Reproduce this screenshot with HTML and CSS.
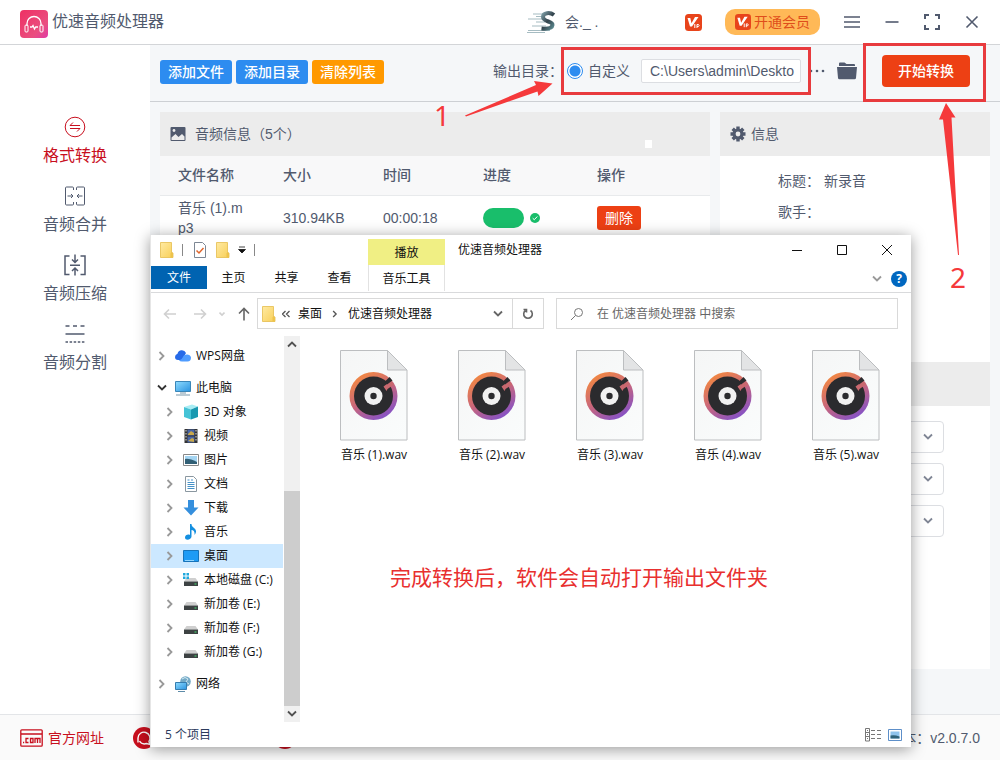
FILE: index.html
```html
<!DOCTYPE html>
<html lang="zh-CN">
<head>
<meta charset="utf-8">
<title>优速音频处理器</title>
<link rel="stylesheet" href="styles.css">
</head>
<body>
<svg class="defs" width="0" height="0" aria-hidden="true">
  <defs>
    <linearGradient id="g-logo" x1="0" y1="0" x2="1" y2="1"><stop offset="0" stop-color="#ee2f63"/><stop offset=".7" stop-color="#ea4f80"/><stop offset="1" stop-color="#e03aa8"/></linearGradient>
    <linearGradient id="g-ring" x1=".2" y1="0" x2=".8" y2="1"><stop offset="0" stop-color="#f68b3c"/><stop offset=".5" stop-color="#c8667c"/><stop offset="1" stop-color="#7c4fd0"/></linearGradient>
    <linearGradient id="g-folder" x1="0" y1="0" x2="1" y2="1"><stop offset="0" stop-color="#ffeaa2"/><stop offset="1" stop-color="#f8cf58"/></linearGradient>
    <linearGradient id="g-paper" x1="0" y1="0" x2="1" y2="1"><stop offset="0" stop-color="#f5f6f6"/><stop offset="1" stop-color="#fafcfc"/></linearGradient>
    <linearGradient id="g-screen" x1="0" y1="0" x2="1" y2="1"><stop offset="0" stop-color="#8fdcff"/><stop offset="1" stop-color="#2b93e0"/></linearGradient>
    <linearGradient id="g-s" x1="0" y1="0" x2="1" y2="1"><stop offset="0" stop-color="#7fa0a8"/><stop offset=".5" stop-color="#33434c"/><stop offset="1" stop-color="#5f9096"/></linearGradient>
  </defs>
  <symbol id="vip" viewBox="0 0 17 17"><rect width="17" height="17" rx="3.5" fill="#e8441b"/><path d="M2.500 4h2.800l1.200 5.200L10 3h3.500L7 12.500H5z" fill="#fff"/><path d="M9.800 10v4M12 14v-3.500h1.500q1.200 1 0 2H12" fill="none" stroke="#fff"/></symbol>
  <symbol id="chev-r" viewBox="0 0 8 10"><path d="M1.500 1l4 4-4 4" fill="none" stroke="currentColor" stroke-width="1.800"/></symbol>
  <symbol id="chev-d" viewBox="0 0 10 8"><path d="M1 1.500l4 4 4-4" fill="none" stroke="currentColor" stroke-width="1.800"/></symbol>
  <symbol id="folder" viewBox="0 0 14 16"><path d="M.5.500h11v10.500h1.500v4.500H.5z" fill="url(#g-folder)" stroke="#e5bd4c" stroke-width=".8"/><path d="M10.500 15.500v-4l1-1h1.500v5z" fill="#eec34b"/></symbol>
  <symbol id="drive" viewBox="0 0 16 16"><path d="M3.500 6h9l2.500 3.500H1z" fill="#cfcfcf"/><path d="M1 9.500h14V14H1z" fill="#3d4243"/><path d="M11.500 11.500h2v1h-2z" fill="#45e070"/></symbol>
  <symbol id="music-file" viewBox="0 0 68 91">
    <path d="M.5.500h47l19.500 19.500v70H.5z" fill="url(#g-paper)" stroke="#bcbec0"/>
    <path d="M47.500.500v19.500H67z" fill="#e3e4e5" stroke="#bcbec0"/>
    <circle cx="33.500" cy="46" r="24" fill="url(#g-ring)"/>
    <circle cx="33.500" cy="46" r="19.500" fill="#2b2b2e"/>
    <path d="M43.500 36.500l7.500-5.500 3 3.500-6.500 4.500-1 2z" fill="#c9686f"/><path d="M45 31.500l4.500-4.500 3 3.500-5.500 4z" fill="#2b2b2e"/>
    <circle cx="33.500" cy="46" r="9" fill="#f1f1f1"/><circle cx="33.500" cy="46" r="3.200" fill="#2b2b2e"/>
  </symbol>
</svg>

<div class="app">
  <header class="app-header">
    <div class="brand">
      <svg width="28" height="28" viewBox="0 0 28 28" aria-hidden="true"><rect width="28" height="28" rx="4" fill="url(#g-logo)"/><path d="M7 16v-2.500a7 7 0 0114 0V16" fill="none" stroke="#fff" stroke-width="1.300"/><rect x="5" y="15" width="3" height="7" rx="1" fill="none" stroke="#fff"/><rect x="20" y="15" width="3" height="7" rx="1" fill="none" stroke="#fff"/><path d="M10 17h2l1-1.500 1.500 3.500 1.200-2H18" fill="none" stroke="#fff" stroke-width="1.300"/></svg>
      <span class="brand-name">优速音频处理器</span>
    </div>
    <div class="account">
      <svg width="30" height="24" viewBox="0 0 30 24" aria-hidden="true"><path d="M1 9h16M6 4h12M9 6.500h8M1 20.500h22M0 22.500h18M5 16h14M9 12h9" stroke="#a6bcc2" stroke-width="1.200"/><path d="M27 5C23 2 16 2.500 16 7c0 5 10 4 9.500 8-.5 4-6 4-11 3.500" fill="none" stroke="url(#g-s)" stroke-width="4"/></svg>
      <span class="user-name">会._ .</span>
    </div>
    <svg class="vip-badge" width="17" height="17" aria-hidden="true"><use href="#vip"/></svg>
    <button class="vip-button" type="button"><svg width="16" height="16" aria-hidden="true"><use href="#vip"/></svg>开通会员</button>
    <div class="window-actions">
      <button type="button" aria-label="菜单"><svg width="16" height="16" viewBox="0 0 16 16"><path d="M0 3h16M0 8h16M0 13h16"/></svg></button>
      <button type="button" aria-label="最小化"><svg width="16" height="16" viewBox="0 0 16 16"><path d="M1.500 8h13"/></svg></button>
      <button type="button" aria-label="全屏"><svg width="16" height="16" viewBox="0 0 16 16"><path d="M1 5V1h4M11 1h4v4M15 11v4h-4M5 15H1v-4" stroke-width="2"/></svg></button>
      <button type="button" aria-label="关闭"><svg width="16" height="16" viewBox="0 0 16 16"><path d="M2.500 2.500l11 11M13.500 2.500l-11 11"/></svg></button>
    </div>
  </header>

  <div class="app-body">
    <nav class="sidebar">
      <a class="nav-item nav-item-active" href="#convert"><svg width="22" height="22" viewBox="0 0 22 22"><circle cx="11" cy="11" r="9.800"/><path d="M16 9.500H6l3-3M6 12.500h10l-3 3"/></svg>格式转换</a>
      <a class="nav-item" href="#merge"><svg width="22" height="22" viewBox="0 0 22 22"><path d="M9.500 5V3q0-1-1-1H2.500q-1 0-1 1v16q0 1 1 1h6q1 0 1-1v-2M12.500 5V3q0-1 1-1h6q1 0 1 1v16q0 1-1 1h-6q-1 0-1-1v-2M3.500 11h5.500M7 9l2 2-2 2M18.500 11H13M15 9l-2 2 2 2"/></svg>音频合并</a>
      <a class="nav-item" href="#compress"><svg width="22" height="22" viewBox="0 0 22 22" stroke-width="1.500"><path d="M5.500 2H1v18.500h4.500M16.500 2H21v18.500h-4.500M6 11.200h10M11 .500V8M8 5.500l3 3 3-3M11 21.500V14M8 17l3-3 3 3"/></svg>音频压缩</a>
      <a class="nav-item" href="#split"><svg width="22" height="22" viewBox="0 0 22 22" stroke-width="1.500"><path d="M1.500 11h19"/><path d="M1.500 3h19" stroke-dasharray="4 3.500"/><path d="M1.500 19h19" stroke-dasharray="2.500 1.600"/></svg>音频分割</a>
    </nav>

    <main class="main">
      <div class="toolbar">
        <div class="tool-buttons">
          <button class="btn btn-blue" type="button">添加文件</button>
          <button class="btn btn-blue" type="button">添加目录</button>
          <button class="btn btn-orange" type="button">清除列表</button>
        </div>
        <div class="output">
          <span class="output-label">输出目录：</span>
          <label class="radio"><input type="radio" name="output" checked>自定义</label>
          <input class="path" type="text" aria-label="输出目录" value="C:\Users\admin\Deskto">
          <button class="icon-button" type="button" aria-label="更多"><svg width="16" height="16" viewBox="0 0 16 16" fill="#515a6e"><circle cx="2" cy="8" r="1.300"/><circle cx="8" cy="8" r="1.300"/><circle cx="14" cy="8" r="1.300"/></svg></button>
          <button class="icon-button" type="button" aria-label="打开目录"><svg width="20" height="18" viewBox="0 0 20 18" fill="#515a6e"><path d="M2 4V1.500q0-1 1-1h4.500L9.500 2H17q1 0 1 1v1zM0 5h20l-1 11q-.2 1.300-1.400 1.300H2.400Q1.200 17.300 1 16z"/></svg></button>
          <button class="start" type="button">开始转换</button>
        </div>
      </div>

      <div class="content">
        <section class="card">
          <h2 class="card-head"><svg width="16" height="16" viewBox="0 0 16 16" aria-hidden="true"><rect x=".5" y="1" width="15" height="14" rx="1" fill="#515a6e"/><circle cx="4" cy="4.500" r="1.400" fill="#ececec"/><path d="M1.500 14v-2.500l4-3.500 3 3 3.500-3 2.500 2.500V14z" fill="#ececec"/></svg><span>音频信息（5个）</span><i class="head-chip"></i></h2>
          <table class="audio-table">
            <colgroup><col class="col-name"><col class="col-size"><col class="col-time"><col class="col-progress"><col></colgroup>
            <thead><tr><th>文件名称</th><th>大小</th><th>时间</th><th>进度</th><th>操作</th></tr></thead>
            <tbody><tr><td class="name">音乐 (1).mp3</td><td>310.94KB</td><td>00:00:18</td>
              <td><div class="progress"><span class="progress-bar"></span><svg width="10" height="10" viewBox="0 0 10 10"><circle cx="5" cy="5" r="5" fill="#19be6b"/><path d="M2.700 5.200l1.600 1.500 3-3.200" fill="none" stroke="#fff"/></svg></div></td>
              <td><button class="delete" type="button">删除</button></td></tr></tbody>
          </table>
        </section>

        <section class="card info-card">
          <h2 class="card-head card-head-info"><svg width="16" height="16" viewBox="0 0 16 16" aria-hidden="true"><path d="M8 .5v15M.5 8h15M2.700 2.700l10.600 10.600M13.300 2.700L2.700 13.300" stroke="#515a6e" stroke-width="3.400"/><circle cx="8" cy="8" r="5.500" fill="#515a6e"/><circle cx="8" cy="8" r="2.400" fill="#ececec"/></svg><span>信息</span></h2>
          <dl class="info-list"><div><dt>标题：</dt><dd>新录音</dd></div><div><dt>歌手：</dt><dd></dd></div></dl>
          <div class="card-head"></div>
          <div class="settings">
            <div class="select-box"><select aria-label="格式"></select><svg width="10" height="8"><use href="#chev-d"/></svg></div>
            <div class="select-box"><select aria-label="质量"></select><svg width="10" height="8"><use href="#chev-d"/></svg></div>
            <div class="select-box"><select aria-label="声道"></select><svg width="10" height="8"><use href="#chev-d"/></svg></div>
          </div>
        </section>
      </div>
    </main>
  </div>

  <footer class="app-footer">
    <a class="site" href="#site"><svg width="23" height="18" viewBox="0 0 23 18" fill="none" stroke="#c80f1e" stroke-width="1.300"><rect x=".8" y=".8" width="21.400" height="16.400" rx="1"/><path d="M1 5h21M3 13.500h1.200M8.500 9.500H6v4h2.500M10.500 9.500h2.500v4h-2.500zM15 14V9.500h5V14M17.500 9.500V14"/></svg>官方网址</a>
    <svg class="contact" width="22" height="22" viewBox="0 0 22 22" aria-hidden="true"><circle cx="11" cy="11" r="11" fill="#c80f1e"/><path d="M5 15.500V11a6 6 0 1111 3.500l1 3-3.500-1A6 6 0 016.500 14" fill="none" stroke="#fff" stroke-width="1.400"/></svg>
    <svg class="contact-next" width="22" height="22" viewBox="0 0 22 22" aria-hidden="true"><circle cx="11" cy="11" r="11" fill="#c80f1e"/></svg>
    <span class="version">版本：v2.0.7.0</span>
  </footer>

  <section class="explorer">
    <div class="ribbon">
      <div class="quick">
        <svg width="14" height="16"><use href="#folder"/></svg>
        <i class="quick-line"></i>
        <svg class="quick-check" width="12" height="16" viewBox="0 0 12 16"><path d="M.5.500h8l3 3v12H.5z" fill="#fff" stroke="#7d8794"/><path d="M2.500 8.500l2.500 2.500 4.500-5" fill="none" stroke="#e0662c" stroke-width="1.500"/></svg>
        <svg width="14" height="16"><use href="#folder"/></svg>
        <svg width="8" height="8" viewBox="0 0 8 8"><path d="M1 1h6M.5 3.500h7L4 7z" fill="#111" stroke="#111" stroke-width=".8"/></svg>
        <i class="quick-line"></i>
      </div>
      <div class="context-tab">播放</div>
      <div class="title-bar">
        <span>优速音频处理器</span>
        <div class="caption-buttons">
          <button type="button" aria-label="最小化"><svg width="12" height="12" viewBox="0 0 12 12"><path d="M1 6.500h10"/></svg></button>
          <button type="button" aria-label="最大化"><svg width="12" height="12" viewBox="0 0 12 12"><path d="M1.500 1.500h9v9h-9z"/></svg></button>
          <button type="button" aria-label="关闭"><svg width="12" height="12" viewBox="0 0 12 12"><path d="M1 1l10 10M11 1L1 11"/></svg></button>
        </div>
      </div>
      <div class="tabs"><button class="tab tab-file" type="button">文件</button><button class="tab" type="button">主页</button><button class="tab" type="button">共享</button><button class="tab" type="button">查看</button></div>
      <button class="tab tab-tools" type="button">音乐工具</button>
      <div class="ribbon-end"><svg class="fade" width="10" height="8"><use href="#chev-d"/></svg><button class="help" type="button" aria-label="帮助">?</button></div>
    </div>

    <div class="address-row">
      <div class="arrows">
        <svg class="faint" width="14" height="14" viewBox="0 0 14 14"><path d="M13 7H1.500M6 2.500L1.500 7 6 11.500"/></svg>
        <svg class="faint" width="14" height="14" viewBox="0 0 14 14"><path d="M1 7h11.500M8 2.500L12.500 7 8 11.500"/></svg>
        <svg class="faint" width="6" height="6" viewBox="0 0 6 6"><path d="M.5 1.500L3 4l2.500-2.500"/></svg>
        <svg class="up" width="14" height="14" viewBox="0 0 14 14"><path d="M7 13.500V1.500M2 6.500l5-5 5 5"/></svg>
      </div>
      <div class="address">
        <svg width="14" height="16"><use href="#folder"/></svg>
        <svg class="crumb-gap" width="8" height="8" viewBox="0 0 8 8" fill="none" stroke="#555" stroke-width="1.300"><path d="M3.500 1l-3 3 3 3M7.500 1l-3 3 3 3"/></svg>
        <span>桌面</span>
        <svg class="crumb-sep" width="6" height="8"><use href="#chev-r"/></svg>
        <span class="crumb-last">优速音频处理器</span>
        <svg class="mid" width="10" height="8"><use href="#chev-d"/></svg>
        <button class="refresh" type="button" aria-label="刷新"><svg width="12" height="12" viewBox="0 0 12 12" fill="none" stroke="#666" stroke-width="1.600"><path d="M8.500 2.500a4.300 4.300 0 11-5 0M1.500 1.500h3v3"/></svg></button>
      </div>
      <label class="search"><svg width="14" height="14" viewBox="0 0 14 14" fill="none" stroke="#777"><circle cx="8.500" cy="5.500" r="4"/><path d="M5.500 8.500L1 13"/></svg><input type="text" aria-label="搜索" placeholder="在 优速音频处理器 中搜索"></label>
    </div>

    <div class="panes">
      <ul class="tree">
        <li><svg class="chev" width="8" height="10"><use href="#chev-r"/></svg><svg width="16" height="16" viewBox="0 0 16 16"><path d="M0 9a3.500 3.500 0 012.500-3.300A4.500 4.500 0 0111 5L7 12H3Q0 12 0 9z" fill="#276ae8"/><path d="M4 12.500q3-1 4-3.500c1.500-3.500 7.500-3 8 .5Q16 13.500 12.500 13.500H7q-2 0-3-1z" fill="#4f9cff"/></svg>WPS网盘</li>
        <li class="group"><svg class="chev-open" width="10" height="8"><use href="#chev-d"/></svg><svg width="16" height="16" viewBox="0 0 16 16"><path d="M.5 1.500h15v10H.5z" fill="url(#g-screen)" stroke="#3a86b8"/><path d="M5 13h6M1 15h14" stroke="#7897aa"/></svg>此电脑</li>
        <li class="child"><svg class="chev" width="8" height="10"><use href="#chev-r"/></svg><svg width="16" height="16" viewBox="0 0 16 16"><path d="M1 3l8-2.500 6 2-7 3z" fill="#a8edf4"/><path d="M1 3l7 2.500V15.500L1 13z" fill="#45c3d6"/><path d="M8 5.500l7-3V13l-7 2.500z" fill="#1898b0"/></svg>3D 对象</li>
        <li class="child"><svg class="chev" width="8" height="10"><use href="#chev-r"/></svg><svg width="16" height="16" viewBox="0 0 16 16"><path d="M1.500 1h13v14h-13z" fill="#333"/><path d="M4.500 1.500h7v6h-7zM4.500 8.500h7v6h-7z" fill="#4866a8"/><path d="M5 6l3-3 3 2v2H5zM5 13l4-3 2 1v3z" fill="#c9a84a"/><path d="M3 2v12M13 2v12" stroke="#ddd" stroke-dasharray="1.500 1.500"/></svg>视频</li>
        <li class="child"><svg class="chev" width="8" height="10"><use href="#chev-r"/></svg><svg width="16" height="16" viewBox="0 0 16 16"><path d="M.5 2.500h15v11H.5z" fill="#fff" stroke="#888"/><path d="M2 4h12v8H2z" fill="#a5d5f2"/><path d="M2 7q4-1 12 3v2H2z" fill="#315f75"/></svg>图片</li>
        <li class="child"><svg class="chev" width="8" height="10"><use href="#chev-r"/></svg><svg width="16" height="16" viewBox="0 0 16 16"><path d="M2.500.500h8l3 3v12h-11z" fill="#fff" stroke="#8a97a0"/><path d="M4.500 4h2M8 4h2M4.500 6.500h7M4.500 8.500h7M4.500 10.500h7M4.500 12.500h7" stroke="#4692c8"/></svg>文档</li>
        <li class="child"><svg class="chev" width="8" height="10"><use href="#chev-r"/></svg><svg width="16" height="16" viewBox="0 0 16 16"><path d="M5 0h6v7.500h4.500L8 15.500.5 7.500H5z" fill="#358fdd"/></svg>下载</li>
        <li class="child"><svg class="chev" width="8" height="10"><use href="#chev-r"/></svg><svg width="16" height="16" viewBox="0 0 16 16"><path d="M7 0h1.500c0 4 5 4 4.500 8q-.5 2-1.500 3 .5-5-3-5v6.500C8.500 16 2 17 2 13.500c0-2.500 3-3.500 5-2.500z" fill="#148fe0"/></svg>音乐</li>
        <li class="child selected"><svg class="chev" width="8" height="10"><use href="#chev-r"/></svg><svg width="16" height="16" viewBox="0 0 16 16"><path d="M.5 2.500h15v11H.5z" fill="#1e9bf5" stroke="#1773b9"/><path d="M2 12.500h9" stroke="#92d6ff"/></svg>桌面</li>
        <li class="child"><svg class="chev" width="8" height="10"><use href="#chev-r"/></svg><svg width="16" height="16" viewBox="0 0 16 16"><use href="#drive"/><path d="M0 1h2.500v2.500H0zM3.500 1H6v2.500H3.500zM0 4.500h2.500V7H0zM3.500 4.500H6V7H3.500z" fill="#20a8dd"/></svg>本地磁盘 (C:)</li>
        <li class="child"><svg class="chev" width="8" height="10"><use href="#chev-r"/></svg><svg width="16" height="16"><use href="#drive"/></svg>新加卷 (E:)</li>
        <li class="child"><svg class="chev" width="8" height="10"><use href="#chev-r"/></svg><svg width="16" height="16"><use href="#drive"/></svg>新加卷 (F:)</li>
        <li class="child"><svg class="chev" width="8" height="10"><use href="#chev-r"/></svg><svg width="16" height="16"><use href="#drive"/></svg>新加卷 (G:)</li>
        <li class="group"><svg class="chev" width="8" height="10"><use href="#chev-r"/></svg><svg width="16" height="16" viewBox="0 0 16 16"><circle cx="10.500" cy="5.500" r="5.300" fill="#73a9c6"/><path d="M7 3q3-3 6 0l-2 3 3 2" fill="none" stroke="#d2e9f3"/><path d="M.5 6.500h11v7H.5z" fill="url(#g-screen)" stroke="#357cae"/><path d="M3 15.500h7" stroke="#5d8ba8"/></svg>网络</li>
      </ul>
      <div class="scrollbar"><span class="scroll-arrow"><svg class="flip" width="10" height="8"><use href="#chev-d"/></svg></span><span class="track"></span><span class="thumb"></span><span class="scroll-arrow"><svg width="10" height="8"><use href="#chev-d"/></svg></span></div>
      <div class="files">
        <figure><svg width="68" height="91"><use href="#music-file"/></svg><figcaption>音乐 (1).wav</figcaption></figure>
        <figure><svg width="68" height="91"><use href="#music-file"/></svg><figcaption>音乐 (2).wav</figcaption></figure>
        <figure><svg width="68" height="91"><use href="#music-file"/></svg><figcaption>音乐 (3).wav</figcaption></figure>
        <figure><svg width="68" height="91"><use href="#music-file"/></svg><figcaption>音乐 (4).wav</figcaption></figure>
        <figure><svg width="68" height="91"><use href="#music-file"/></svg><figcaption>音乐 (5).wav</figcaption></figure>
      </div>
    </div>

    <div class="status"><span>5 个项目</span>
      <div class="views"><svg width="16" height="14" viewBox="0 0 16 14" fill="none" stroke="#777"><path d="M.5.500h4v12.500h-4zM.5 4.500h4M.5 8.500h4M2 2.500h1M2 6.500h1M2 10.500h1M6 2.500h4M12 2.500h4M6 6.500h4M12 6.500h4M6 10.500h4M12 10.500h4"/></svg>
      <svg width="14" height="12" viewBox="0 0 14 12"><path d="M.5.500h13v11H.5z" fill="#fff" stroke="#5d8fc9"/><path d="M2.500 2.500h9v7h-9z" fill="#8fc4ec"/><path d="M2.500 6.500q4-1 9 1v2h-9z" fill="#2f6379"/></svg></div>
    </div>
  </section>

  <div class="notes">
    <svg width="1000" height="300" viewBox="0 0 1000 300" aria-hidden="true">
      <g fill="none" stroke="#e83b3e" stroke-width="3"><path d="M562.500 48.500h247v45h-247zM864.500 44.500h120v56h-120z"/></g>
      <g fill="#f5393b"><path d="M465 115.500L536 85 534 81 552.500 83.500 538.500 96 537.500 91.500 466 116.500z"/><path d="M958 255L943 119.500H939L946 103 955.500 117.500H951.500L959 255z"/></g>
    </svg>
    <span class="note note-one">1</span>
    <span class="note note-two">2</span>
    <p class="note note-message">完成转换后，软件会自动打开输出文件夹</p>
  </div>
</div>
</body>
</html>
```
FILE: styles.css
```css
* { box-sizing: border-box; }
body {
  margin: 0;
  color: #515a6e;
  font: 14px/20px "Liberation Sans", "Noto Sans CJK SC", sans-serif;
}
button, input, select { font: inherit; color: inherit; }
button { border: 0; padding: 0; background: none; }
svg { display: block; flex: none; }
.defs { position: absolute; }
h2, p, ul, dl, dd, figure { margin: 0; padding: 0; }

.app {
  position: relative;
  display: flex;
  flex-direction: column;
  min-height: 100vh;
  overflow: hidden;
  background: #fff;
}

/* Header */
.app-header {
  display: flex;
  align-items: center;
  height: 45px;
  padding: 0 20px;
  border-bottom: 1px solid #d3d5d8;
}
.brand { display: flex; align-items: center; gap: 4px; margin-right: auto; }
.brand svg { margin-top: 3px; }
.brand-name { font-size: 16px; }
.account { display: flex; align-items: center; gap: 8px; width: 158px; }
.vip-button {
  display: flex;
  align-items: center;
  gap: 3px;
  height: 26px;
  margin: 0 24px 0 23px;
  padding: 0 10px;
  border-radius: 10px;
  background: #ffb957;
  color: #df4d1b;
}
.window-actions { display: flex; gap: 24px; }
.window-actions svg { fill: none; stroke: #515a6e; stroke-width: 1.6; }

.app-body { display: flex; flex: 1; }

/* Sidebar */
.sidebar {
  display: flex;
  flex-direction: column;
  gap: 17px;
  width: 150px;
  padding-top: 71px;
}
.nav-item {
  display: flex;
  flex-direction: column;
  align-items: center;
  gap: 6px;
  color: #515a6e;
  font-size: 16px;
  line-height: 24px;
  text-decoration: none;
}
.nav-item svg { fill: none; stroke: currentColor; }
.nav-item-active { color: #c80f1e; }

/* Toolbar */
.main { flex: 1; min-width: 0; background: #f5f7f9; }
.toolbar {
  display: flex;
  justify-content: space-between;
  height: 57px;
  padding: 0 30px 0 10px;
  border-bottom: 1px solid #cdd0d4;
}
.tool-buttons { display: flex; gap: 4px; padding-top: 15px; }
.btn {
  height: 24px;
  padding: 0 8px;
  border-radius: 3px;
  background: #2d8cf0;
  color: #fff;
  font-weight: 500;
}
.btn-orange { background: #ff9900; }
.output { display: flex; align-items: center; height: 52px; }
.output-label { width: 74px; white-space: nowrap; }
.radio { display: flex; align-items: center; gap: 5px; margin-right: 11px; }
.radio input {
  appearance: none;
  width: 16px;
  height: 16px;
  margin: 0;
  border: 1px solid #2d8cf0;
  border-radius: 50%;
  background: radial-gradient(circle, #2d8cf0 5px, #fff 6px);
}
.path {
  width: 160px;
  height: 24px;
  margin-right: 8px;
  padding: 0 4px 0 8px;
  border: 1px solid #dcdee2;
  border-radius: 2px;
  background: #fff;
}
.icon-button { margin-right: 12px; }
.start {
  width: 88px;
  height: 32px;
  margin-left: 13px;
  border-radius: 4px;
  background: #ed4014;
  color: #fff;
  font-weight: 500;
}

/* Cards */
.content {
  display: grid;
  grid-template-columns: 1fr 270px;
  gap: 10px;
  padding: 10px 10px 45px;
}
.card { min-height: 557px; background: #fff; }
.card-head {
  display: flex;
  align-items: center;
  gap: 9px;
  height: 44px;
  padding: 0 58px 0 10px;
  background: #ececec;
  font-size: 14px;
  font-weight: 400;
}
.card-head-info { gap: 5px; }
.head-chip { width: 7px; height: 8px; margin: 20px 0 0 auto; background: #fff; }
.audio-table { width: 100%; border-collapse: collapse; table-layout: fixed; }
.audio-table th, .audio-table td { padding: 0 18px; text-align: left; }
.audio-table th {
  height: 39px;
  border-bottom: 1px solid #e8eaec;
  background: #f8f8f9;
  font-weight: 500;
}
.audio-table td { height: 46px; }
.audio-table .name { word-break: break-all; }
.col-name { width: 105px; }
.col-size, .col-time { width: 100px; }
.col-progress { width: 114px; }
.progress { display: flex; align-items: center; gap: 6px; }
.progress-bar { width: 41px; height: 20px; border-radius: 10px; background: #19be6b; }
.delete {
  width: 44px;
  height: 24px;
  border-radius: 3px;
  background: #ed4014;
  color: #fff;
}
.info-list { height: 206px; padding: 10px 20px 0 58px; }
.info-list div { display: flex; gap: 4px; line-height: 31px; }
.info-list dt { width: 42px; white-space: nowrap; }
.settings { display: grid; gap: 10px; padding: 15px 46px 0 70px; }
.select-box { position: relative; height: 32px; }
.select-box select {
  appearance: none;
  width: 100%;
  height: 100%;
  border: 1px solid #dcdee2;
  border-radius: 4px;
  background: #fff;
}
.select-box svg { position: absolute; top: 12px; right: 11px; color: #808695; }

/* Footer */
.app-footer {
  display: flex;
  align-items: center;
  height: 46px;
  padding: 0 20px;
  border-top: 1px solid #e3e5e8;
  background: #fafafa;
}
.site { display: flex; align-items: center; gap: 5px; color: #c80f1e; text-decoration: none; }
.contact { margin-left: 29px; }
.contact-next { margin-left: 119px; }
.version { margin-left: auto; }

/* File window */
.explorer {
  position: absolute;
  inset: 235px 89px 13px 150px;
  display: flex;
  flex-direction: column;
  border-left: 1px solid #e6e6e6;
  background: #fff;
  box-shadow: 0 2px 14px rgba(0, 0, 0, 0.4);
  color: #111;
  font: 12px/16px "Open Sans", "Noto Sans CJK SC", sans-serif;
}
.ribbon {
  display: grid;
  grid-template: 30px 27px / 217px 77px 1fr;
  border-bottom: 1px solid #d9dadc;
}
.quick { display: flex; align-items: center; gap: 8px; padding-left: 9px; }
.quick-line { width: 1px; height: 12px; background: #888; }
.quick-check { margin: 0 2px 0 3px; }
.context-tab { margin-top: 4px; background: #f0ef84; line-height: 27px; text-align: center; }
.title-bar { display: flex; align-items: center; justify-content: space-between; padding: 0 2px 0 13px; }
.caption-buttons { display: flex; }
.caption-buttons button { display: grid; width: 45px; height: 30px; place-items: center; }
.caption-buttons svg { fill: none; stroke: #111; }
.tabs { display: flex; padding-top: 1px; }
.tab { width: 53px; height: 23px; padding-top: 1px; }
.tab-file { width: 56px; background: #0063b1; color: #fff; }
.tab-tools { width: 77px; height: 26px; border: solid #e2e2e2; border-width: 0 1px; }
.ribbon-end { display: flex; align-items: center; justify-content: flex-end; gap: 9px; padding-right: 4px; }
.fade { color: #999; }
.help { width: 16px; height: 16px; border-radius: 50%; background: #0067c0; color: #fff; font-weight: 700; }

.address-row { display: flex; padding: 5px 13px 7px 12px; }
.arrows { display: flex; align-items: center; gap: 16px; width: 94px; }
.arrows svg { fill: none; stroke: #666; stroke-width: 1.6; }
.arrows .faint { stroke: #d0d0d0; }
.arrows .faint + .faint + .faint { margin: 0 -4px; }
.address {
  display: flex;
  align-items: center;
  width: 287px;
  height: 31px;
  padding-left: 4px;
  border: 1px solid #d9d9d9;
}
.crumb-gap { margin: 0 8px 0 6px; }
.crumb-sep { margin: 0 10px; color: #555; }
.crumb-last { margin-right: auto; }
.mid { color: #666; }
.refresh { display: grid; width: 31px; height: 29px; margin-left: 9px; border-left: 1px solid #d9d9d9; place-items: center; }
.search {
  display: flex;
  flex: 1;
  align-items: center;
  gap: 13px;
  margin-left: 12px;
  padding: 0 13px;
  border: 1px solid #d9d9d9;
}
.search input { flex: 1; min-width: 0; padding: 0; border: 0; outline: 0; background: none; }
.search input::placeholder { color: #666; opacity: 1; }

.panes { display: flex; flex: 1; min-height: 0; }
.tree { width: 132px; padding-top: 8px; list-style: none; }
.tree li { display: flex; align-items: center; gap: 5px; height: 24px; padding-left: 6px; white-space: nowrap; }
.tree .child { padding-left: 14px; }
.tree .group { margin-top: 8px; }
.tree .selected { background: #cce8ff; }
.chev { margin: 0 4px 0 1px; color: #999; }
.chev-open { margin-right: 3px; color: #333; }
.scrollbar { display: flex; flex-direction: column; width: 16px; margin-left: 1px; background: #f0f0f0; }
.scroll-arrow { display: grid; height: 16px; color: #505050; place-items: center; }
.flip { rotate: 180deg; }
.track { flex: 139; }
.thumb { flex: 215; background: #cdcdcd; }
.files { display: flex; flex: 1; flex-wrap: wrap; align-content: flex-start; padding: 14px 0 0 15px; }
.files figure { display: flex; flex-direction: column; align-items: center; gap: 6px; width: 118px; }
.status {
  display: flex;
  align-items: center;
  justify-content: space-between;
  height: 25px;
  padding: 0 9px 0 14px;
  color: #2b3a5c;
}
.views { display: flex; align-items: center; gap: 7px; }

/* Step markers */
.notes { position: absolute; top: 0; right: 0; width: 1000px; pointer-events: none; }
.note {
  position: absolute;
  color: #f5393b;
  font: 28px/32px "Noto Sans", "Noto Sans CJK SC", sans-serif;
}
.note-one { top: 99px; left: 434px; }
.note-two { top: 261px; left: 950px; }
.note-message { top: 561px; left: 390px; color: #e8302f; font-size: 21px; white-space: nowrap; }
```
